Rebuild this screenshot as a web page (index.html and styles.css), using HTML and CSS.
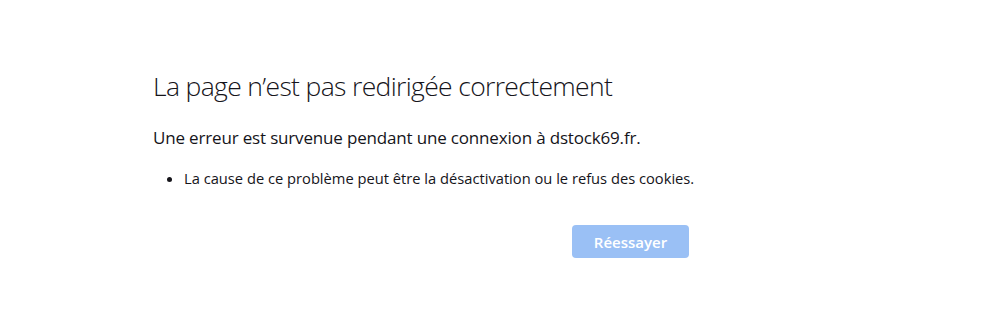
FILE: index.html
```html
<!DOCTYPE html>
<html lang="fr">
<head>
  <meta charset="UTF-8" />
  <title>Problème lors du chargement de la page</title>
  <link rel="stylesheet" href="styles.css">
</head>
<body>
  <div class="container">
    <h1 class="title">La page n’est pas redirigée correctement</h1>
    <p class="short-desc">Une erreur est survenue pendant une connexion à dstock69.fr.</p>
    <ul class="long-desc">
      <li>La cause de ce problème peut être la désactivation ou le refus des cookies.</li>
    </ul>
    <div class="button-row">
      <button class="try-again" disabled>Réessayer</button>
    </div>
  </div>
</body>
</html>
```

FILE: styles.css
```css
body {
  font-family: "Open Sans", "Noto Sans", sans-serif;
  margin: 0;
  background-color: #fff;
  color: #15141a;
}
.container {
  width: 580px;
  padding: 66px 0 0 153px;
}
.title {
  font-size: 26.5px;
  font-weight: 300;
  letter-spacing: -0.65px;
  margin: 0;
  line-height: 40px;
}
.short-desc {
  font-size: 17px;
  letter-spacing: -0.17px;
  margin: 20px 0 0;
  line-height: 24px;
}
.long-desc {
  font-size: 14.7px;
  margin: 17px 0 0;
  padding-left: 31px;
  line-height: 22px;
}
.button-row {
  display: flex;
  justify-content: flex-end;
  margin-top: 36px;
  padding-right: 44px;
}
.try-again {
  width: 117px;
  height: 33px;
  border: none;
  border-radius: 4px;
  background-color: #9ac0f5;
  color: #fff;
  font-family: inherit;
  font-size: 15px;
  font-weight: 600;
}
```
